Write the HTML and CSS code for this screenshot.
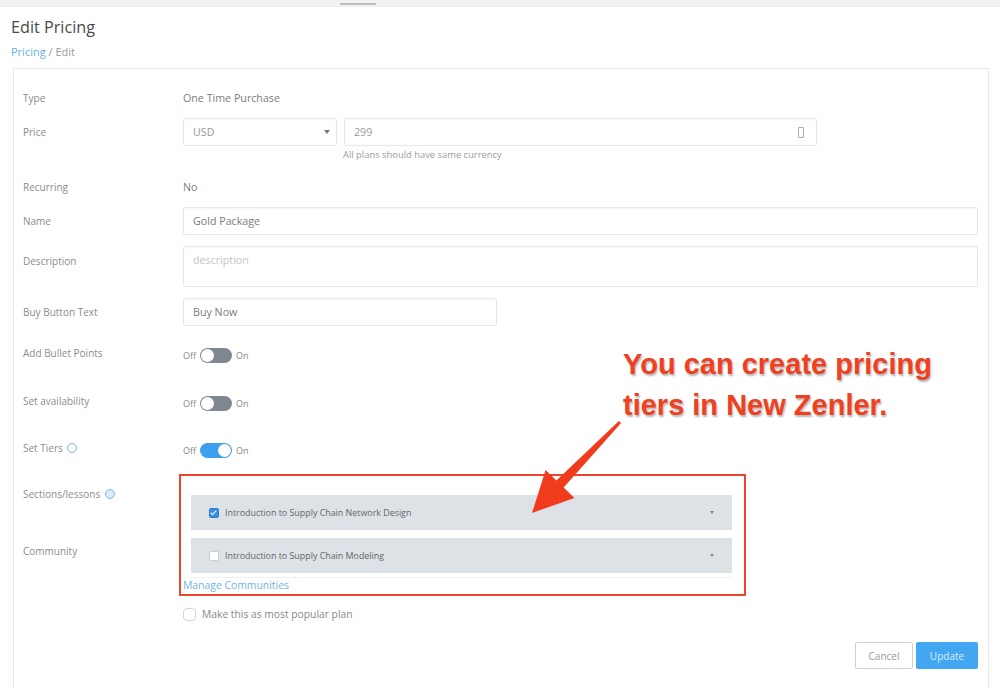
FILE: index.html
```html
<!DOCTYPE html>
<html lang="en">
<head>
  <meta charset="UTF-8">
  <meta name="viewport" content="width=device-width, initial-scale=1">
  <title>Edit Pricing</title>
  <link rel="stylesheet" href="styles.css">
</head>
<body>
<div class="page">
  <div class="topbar"><span class="handle"></span></div>

  <div class="head">
    <h1>Edit Pricing</h1>
    <div class="crumbs"><a href="#">Pricing</a> / Edit</div>
  </div>

  <div class="card">
    <div class="row">
      <div class="label">Type</div>
      <div class="value">One Time Purchase</div>
    </div>

    <div class="row row-top row-price">
      <div class="label lh-input">Price</div>
      <div>
        <div class="price-fields">
          <div class="field select">USD <span class="caret"></span></div>
          <div class="field amount">299 <span class="spin"></span></div>
        </div>
        <div class="help">All plans should have same currency</div>
      </div>
    </div>

    <div class="row">
      <div class="label">Recurring</div>
      <div class="value">No</div>
    </div>

    <div class="row row-name">
      <div class="label">Name</div>
      <div class="field">Gold Package</div>
    </div>

    <div class="row row-top row-desc">
      <div class="label pad-desc">Description</div>
      <div class="field textarea">description</div>
    </div>

    <div class="row row-buy">
      <div class="label">Buy Button Text</div>
      <div class="field short">Buy Now</div>
    </div>

    <div class="row row-bullets">
      <div class="label up">Add Bullet Points</div>
      <div class="switch-line">Off <span class="switch"></span> On</div>
    </div>

    <div class="row row-avail">
      <div class="label up">Set availability</div>
      <div class="switch-line">Off <span class="switch"></span> On</div>
    </div>

    <div class="row row-tiers">
      <div class="label up">Set Tiers <span class="info"></span></div>
      <div class="switch-line">Off <span class="switch on"></span> On</div>
    </div>

    <div class="row row-top row-sections">
      <div class="label-stack">
        <div class="label">Sections/lessons <span class="info filled"></span></div>
        <div class="label community">Community</div>
      </div>
      <div class="highlight">
        <div class="accordion">
          <div class="acc-item"><span class="check checked"></span>Introduction to Supply Chain Network Design<span class="acc-caret"></span></div>
          <div class="acc-item"><span class="check"></span>Introduction to Supply Chain Modeling<span class="acc-caret"></span></div>
        </div>
        <div class="communities">
          <a href="#">Manage Communities</a>
        </div>
      </div>
    </div>

    <div class="row row-popular">
      <div></div>
      <div class="popular"><span class="radio"></span>Make this as most popular plan</div>
    </div>

    <div class="actions">
      <button class="btn cancel">Cancel</button>
      <button class="btn update">Update</button>
    </div>
  </div>

  <div class="note">You can create pricing<br>tiers in New Zenler.</div>
  <svg class="arrow" width="1000" height="688" viewBox="0 0 1000 688">
    <polygon points="618.9,421 556.4,480.5 545.6,470.1 532,513 574.4,497.9 563.6,487.5 621.1,423" fill="#f03c1d"/>
  </svg>
</div>
</body>
</html>
```

FILE: styles.css
```css
body {
  margin: 0;
  font-family: "Open Sans", Lato, sans-serif;
  background-color: #fff;
  color: #777;
}
.page {
  position: relative;
  height: 688px;
  overflow: hidden;
}
.topbar {
  height: 6px;
  background-color: #f3f3f3;
  border-bottom: 1px solid #ececec;
}
.handle {
  display: block;
  width: 36px;
  height: 2px;
  margin-left: 340px;
  position: relative;
  top: 3px;
  background-color: #bdbdbd;
}
.head {
  padding: 0 11px;
}
h1 {
  margin: 10px 0 0;
  font-size: 16.2px;
  line-height: 20px;
  font-weight: 400;
  color: #4a4a4a;
}
.crumbs {
  margin-top: 9px;
  font-size: 11px;
  line-height: 12px;
  color: #999;
}
.crumbs a {
  color: #6aaee6;
  text-decoration: none;
}
.card {
  margin: 10px 0 0 13px;
  width: 976px;
  height: 640px;
  box-sizing: border-box;
  border: 1px solid #e9e9e9;
  padding: 15px 10px 0 9px;
}
.row {
  display: grid;
  grid-template-columns: 160px 1fr;
  align-items: center;
  min-height: 28px;
  margin-bottom: 6px;
}
.row-top { align-items: start; }
.label {
  font-size: 10px;
  line-height: 12px;
  color: #8c8c8c;
}
.label.up { margin-top: -5px; }
.lh-input { line-height: 28px; }
.value {
  font-size: 10.7px;
  color: #7c7c7c;
}
.field {
  height: 28px;
  box-sizing: border-box;
  border: 1px solid #e8e8e8;
  border-radius: 2px;
  box-shadow: inset 0 1px 2px rgba(0,0,0,0.04);
  padding: 0 9px;
  display: flex;
  align-items: center;
  font-size: 10.7px;
  color: #7c7c7c;
}
.row-price { margin-bottom: 12px; }
.price-fields {
  display: flex;
  gap: 7px;
}
.select {
  width: 154px;
  justify-content: space-between;
  padding-right: 6px;
  color: #999;
}
.caret {
  width: 0;
  height: 0;
  border-left: 3px solid transparent;
  border-right: 3px solid transparent;
  border-top: 4px solid #777;
}
.amount {
  width: 473px;
  justify-content: space-between;
  padding-right: 12px;
  color: #999;
}
.spin {
  width: 4px;
  height: 9px;
  border: 1px solid #aaa;
  border-radius: 1px;
}
.help {
  margin: 3px 0 0 160px;
  font-size: 9.4px;
  line-height: 12px;
  color: #9c9c9c;
}
.row-name { margin-bottom: 11px; }
.row-desc { margin-bottom: 11px; }
.pad-desc { padding-top: 9px; }
.textarea {
  height: 41px;
  align-items: flex-start;
  padding-top: 6px;
  color: #c4c4c4;
}
.short { width: 314px; }
.row-buy { margin-bottom: 15px; }
.row-bullets { margin-bottom: 20px; }
.row-avail { margin-bottom: 19px; }
.row-tiers { margin-bottom: 10px; }
.switch-line {
  display: flex;
  align-items: center;
  gap: 4px;
  font-size: 9px;
  color: #888;
}
.switch {
  position: relative;
  width: 32px;
  height: 15px;
  border-radius: 8px;
  background-color: #7f8892;
}
.switch::after {
  content: "";
  position: absolute;
  left: 1px;
  top: 1px;
  width: 13px;
  height: 13px;
  border-radius: 50%;
  background-color: #fff;
}
.switch.on { background-color: #3d9ff0; }
.switch.on::after { left: 18px; }
.info {
  display: inline-block;
  width: 8px;
  height: 8px;
  margin-left: 2px;
  vertical-align: -1px;
  border: 1px solid #7ab8ea;
  border-radius: 50%;
}
.info.filled { background-color: #d8ebfa; }
.label-stack { padding-top: 14px; }
.community { margin-top: 45px; }
.highlight {
  width: 567px;
  margin-left: -4px;
  box-sizing: border-box;
  border: 2px solid #e9472c;
  padding: 19px 12px 3px 2px;
}
.accordion {
  margin-left: 8px;
  display: flex;
  flex-direction: column;
  gap: 8px;
}
.acc-item {
  height: 35px;
  display: flex;
  align-items: center;
  padding: 0 18px;
  background-color: #dde2e7;
  font-size: 8.9px;
  color: #666;
}
.check {
  position: relative;
  width: 8px;
  height: 8px;
  margin-right: 6px;
  border: 1px solid #c9cdd2;
  border-radius: 2px;
  background-color: #fff;
}
.check.checked {
  background-color: #3a8de0;
  border-color: #2f7dcc;
}
.check.checked::after {
  content: "";
  position: absolute;
  left: 2px;
  top: 0;
  width: 2px;
  height: 5px;
  border: solid #fff;
  border-width: 0 1px 1px 0;
  transform: rotate(45deg);
}
.acc-caret {
  margin-left: auto;
  width: 0;
  height: 0;
  border-left: 2px solid transparent;
  border-right: 2px solid transparent;
  border-top: 3px solid #888;
}
.communities {
  margin: 4px 0 0 8px;
  border-top: 1px solid #eef0f2;
  padding-top: 1px;
}
.communities a {
  display: block;
  margin-left: -8px;
  font-size: 10.4px;
  line-height: 12px;
  color: #72b3e8;
  text-decoration: none;
}
.row-popular {
  min-height: 24px;
  margin-top: 4px;
  margin-bottom: 16px;
}
.popular {
  display: flex;
  align-items: center;
  gap: 6px;
  font-size: 10.3px;
  color: #888;
}
.radio {
  width: 11px;
  height: 11px;
  border: 1px solid #d4d4d4;
  border-radius: 4px;
}
.actions {
  display: flex;
  justify-content: flex-end;
  gap: 3px;
}
.btn {
  height: 27px;
  padding: 0;
  font-family: inherit;
  font-size: 10px;
  border-radius: 2px;
  cursor: pointer;
}
.cancel {
  width: 58px;
  background-color: #fff;
  border: 1px solid #cfcfcf;
  color: #999;
}
.update {
  width: 62px;
  background-color: #43a6f1;
  border: none;
  color: #d9eeff;
}
.note {
  position: absolute;
  left: 623px;
  top: 344px;
  font-family: "Liberation Sans", Arial, sans-serif;
  font-weight: 700;
  font-size: 29px;
  line-height: 41px;
  color: #ef401f;
  text-shadow: 1px 2px 2px rgba(90,90,90,0.45);
}
.arrow {
  position: absolute;
  left: 0;
  top: 0;
  pointer-events: none;
}
```
